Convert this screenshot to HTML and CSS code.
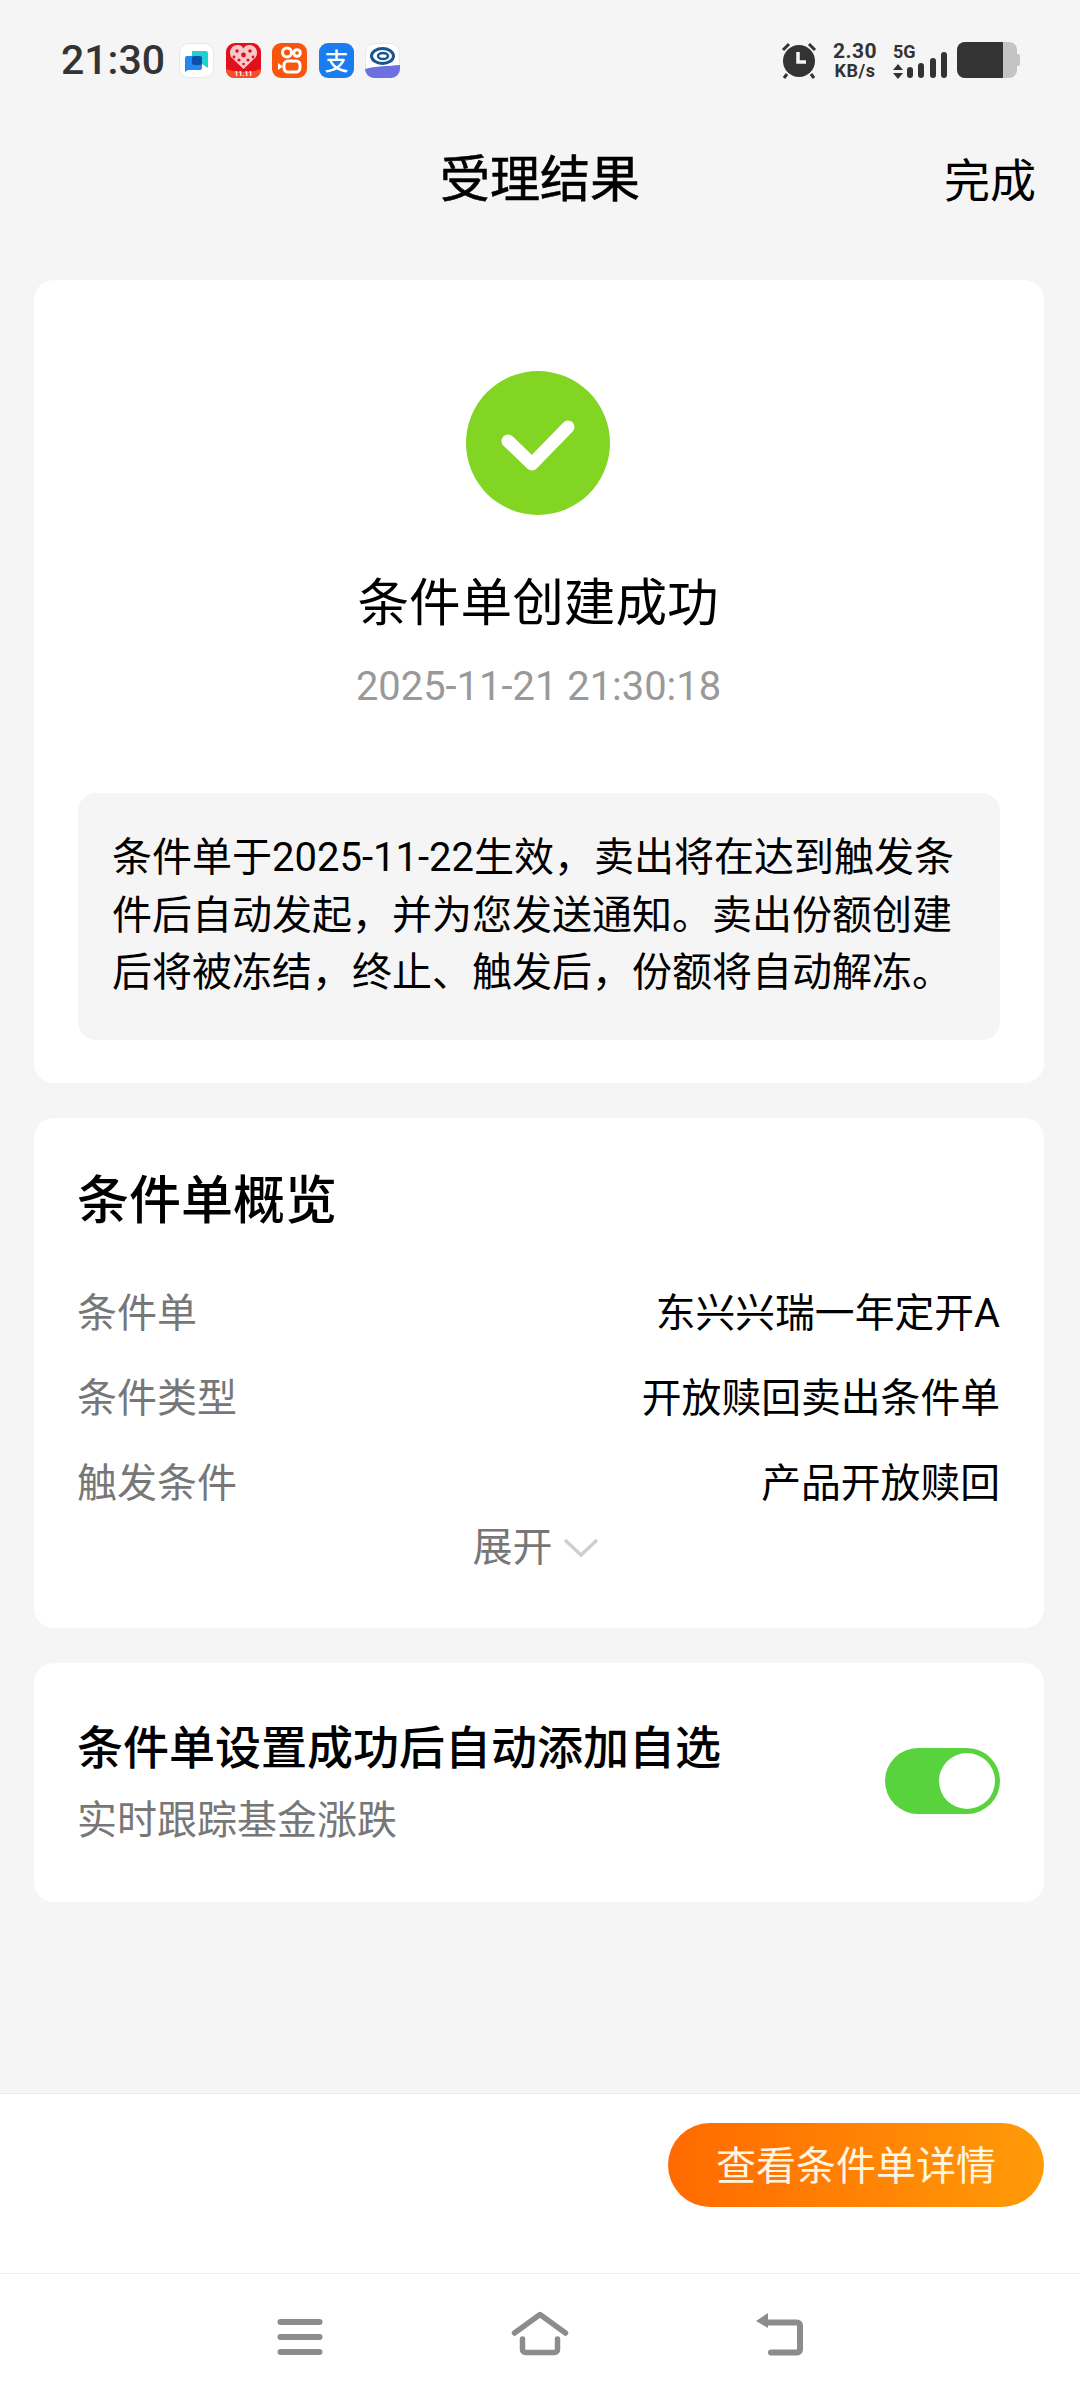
FILE: index.html
```html
<!DOCTYPE html>
<html lang="zh-CN">
<head>
<meta charset="utf-8">
<title>受理结果</title>
<link rel="stylesheet" href="styles.css">
</head>
<body>
<div class="page">
  <div class="status">
    <span class="time">21:30</span>
    <div class="apps">
      <svg class="app" viewBox="0 0 35 35"><rect x=".5" y=".5" width="34" height="34" rx="9" fill="#fff" stroke="#e8e8e8"/><path d="M13 8h14a2 2 0 0 1 2 2v15l-6-4H13z" fill="#1fd0d0"/><path d="M6 15a2 2 0 0 1 2-2h13a2 2 0 0 1 2 2v10a2 2 0 0 1-2 2H9l-3 2z" fill="#2588f0"/><rect x="13" y="13" width="10" height="9" rx="2.500" fill="#0b4fa8"/></svg>
      <svg class="app" viewBox="0 0 35 35"><rect width="35" height="35" rx="9" fill="#e1101c"/><path d="M0 26c6 2 12 3 17.500 3S29 28 35 26v1a8 8 0 0 1-8 8H8a8 8 0 0 1-8-8z" fill="#f2502a"/><path d="M17.500 26 5 14C2 8 6 2 11.500 2c2.500 0 5 1 6 3.500C18.500 3 21 2 23.500 2 29 2 33 8 30 14z" fill="#f9c9c9"/><g fill="#e1101c"><circle cx="11" cy="8" r="1.800"/><circle cx="24" cy="8" r="1.800"/><circle cx="17.500" cy="12" r="2.400"/><circle cx="8" cy="14" r="1.400"/><circle cx="27" cy="14" r="1.400"/><circle cx="13" cy="17" r="1.600"/><circle cx="22" cy="17" r="1.600"/><circle cx="17.500" cy="21" r="1.300"/></g><text class="app-num" x="17.500" y="33">11.11</text></svg>
      <svg class="app" viewBox="0 0 35 35"><rect width="35" height="35" rx="9" fill="#f8560f"/><g fill="none" stroke="#fff" stroke-width="3"><circle cx="15" cy="9.500" r="4.500"/><circle cx="25" cy="10" r="3.300"/><rect x="12" y="18" width="16" height="11" rx="4"/></g><path d="M6 20l5 3.500-5 3.500z" fill="#fff"/></svg>
      <svg class="app" viewBox="0 0 35 35"><rect width="35" height="35" rx="9" fill="#1b7cf0"/><text class="app-zhi" x="17.500" y="27">支</text></svg>
      <svg class="app" viewBox="0 0 35 35"><rect x=".5" y=".5" width="34" height="34" rx="9" fill="#fff" stroke="#e8e8e8"/><path d="M0 26c10-3 24-3 35-4v4a9 9 0 0 1-9 9H9a9 9 0 0 1-9-9z" fill="#6d70de"/><ellipse cx="17.500" cy="13" rx="11" ry="7.500" fill="none" stroke="#1a5590" stroke-width="3"/><ellipse cx="18" cy="13" rx="5" ry="3" fill="none" stroke="#1a5590" stroke-width="2.500"/></svg>
    </div>
    <div class="sys">
      <svg class="alarm" viewBox="0 0 36 38"><circle cx="18" cy="20" r="16" fill="#333"/><path d="M2 9 8 3M34 9l-6-6M6 33l-3 4M30 33l3 4" stroke="#333" stroke-width="3" fill="none"/><path d="M17 11v10h8" stroke="#f5f5f5" stroke-width="3.500" fill="none"/></svg>
      <div class="speed"><span class="speed-num">2.30</span><span class="speed-unit">KB/s</span></div>
      <div class="net">
        <span class="net-label">5G</span>
        <svg class="arrows" viewBox="0 0 10 15"><path d="M5 0l5 6H0zM5 15l5-6H0z" fill="#333"/></svg>
      </div>
      <svg class="signal" viewBox="0 0 41 26"><g fill="#333"><rect x="0" y="15" width="6" height="11" rx="3"/><rect x="11" y="11" width="6" height="15" rx="3"/><rect x="23" y="6" width="6" height="20" rx="3"/><rect x="34" y="0" width="6" height="26" rx="3"/></g></svg>
      <svg class="battery" viewBox="0 0 63 36"><rect x="0" y="0" width="60" height="36" rx="8" fill="#c4c4c4"/><path d="M8 0h38v36H8a8 8 0 0 1-8-8V8a8 8 0 0 1 8-8z" fill="#333"/><path d="M60 12h1a2 2 0 0 1 2 2v8a2 2 0 0 1-2 2h-1z" fill="#c4c4c4"/></svg>
    </div>
  </div>

  <header class="header">
    <span></span>
    <h1 class="title">受理结果</h1>
    <span class="done">完成</span>
  </header>

  <main class="main">
    <section class="card result">
      <svg class="ok" viewBox="0 0 144 144"><circle cx="72" cy="72" r="72" fill="#82d523"/><path d="M42 70l24 23 36-37" fill="none" stroke="#fff" stroke-width="13" stroke-linecap="round" stroke-linejoin="round"/></svg>
      <h2 class="result-title">条件单创建成功</h2>
      <p class="result-date">2025-11-21 21:30:18</p>
      <p class="note">条件单于2025-11-22生效，卖出将在达到触发条<br>件后自动发起，并为您发送通知。卖出份额创建<br>后将被冻结，终止、触发后，份额将自动解冻。</p>
    </section>

    <section class="card overview">
      <h2 class="overview-title">条件单概览</h2>
      <div class="row"><span class="label">条件单</span><span class="value">东兴兴瑞一年定开A</span></div>
      <div class="row"><span class="label">条件类型</span><span class="value">开放赎回卖出条件单</span></div>
      <div class="row"><span class="label">触发条件</span><span class="value">产品开放赎回</span></div>
      <div class="expand"><span>展开</span><svg class="chev" viewBox="0 0 36 20"><path d="M2 2l16 15L34 2" fill="none" stroke="#cfcfcf" stroke-width="3.500"/></svg></div>
    </section>

    <section class="card pref">
      <div class="pref-text">
        <div class="pref-title">条件单设置成功后自动添加自选</div>
        <div class="pref-sub">实时跟踪基金涨跌</div>
      </div>
      <div class="toggle"><span class="knob"></span></div>
    </section>
  </main>

  <footer class="footer">
    <button class="cta">查看条件单详情</button>
  </footer>

  <nav class="nav">
    <svg class="nav-icon" viewBox="0 0 60 60"><g fill="#8c8c8c"><rect x="7.500" y="15" width="45" height="6" rx="3"/><rect x="7.500" y="30" width="45" height="6" rx="3"/><rect x="7.500" y="45" width="45" height="6" rx="3"/></g></svg>
    <svg class="nav-icon" viewBox="0 0 60 60"><g fill="none" stroke="#8c8c8c" stroke-width="5.500" stroke-linecap="round" stroke-linejoin="round"><path d="M4.500 29 30 10.500 55.500 29"/><path d="M12.500 35v10.500a3 3 0 0 0 3 3h29a3 3 0 0 0 3-3V35"/></g></svg>
    <svg class="nav-icon" viewBox="0 0 60 60"><path d="M17 18.500h30a3 3 0 0 1 3 3v24a3 3 0 0 1-3 3H21" fill="none" stroke="#8c8c8c" stroke-width="6" stroke-linecap="round"/><path d="M18 9 6 17l12 7z" fill="#8c8c8c"/></svg>
  </nav>
</div>
</body>
</html>
```
FILE: styles.css
```css
* { box-sizing: border-box; }
html, body { margin: 0; padding: 0; }
body { font-family: Roboto, "Noto Sans CJK SC", sans-serif; color: #000; background: #f5f5f5; }
h1, h2, p { margin: 0; font-weight: 400; }
.page { width: 1080px; height: 2400px; display: flex; flex-direction: column; overflow: hidden; background: #f5f5f5; }

.status { height: 120px; flex: none; display: flex; align-items: center; padding: 0 60px 0 61px; color: #333; }
.time { font-size: 41px; font-weight: 500; line-height: 50px; }
.apps { display: flex; gap: 11.500px; margin-left: 14px; }
.app { width: 35px; height: 35px; display: block; }
.app-num { font: 700 7px Roboto, sans-serif; fill: #fff; text-anchor: middle; }
.app-zhi { font: 500 24px "Noto Sans CJK SC", sans-serif; fill: #fff; text-anchor: middle; }
.sys { margin-left: auto; display: flex; align-items: center; }
.alarm { width: 36px; height: 38px; display: block; }
.speed { display: flex; flex-direction: column; align-items: center; margin-left: 14px; width: 48px; }
.speed-num { font-size: 21px; font-weight: 700; line-height: 20px; letter-spacing: .5px; }
.speed-unit { font-size: 18px; font-weight: 700; line-height: 19px; letter-spacing: .5px; }
.net { display: flex; flex-direction: column; align-items: flex-start; margin-left: 14px; width: 24px; }
.net-label { font-size: 18px; font-weight: 700; line-height: 20px; }
.arrows { width: 10px; height: 15px; display: block; margin-top: 2px; }
.signal { width: 41px; height: 26px; display: block; margin: 10px 0 0 -10px; }
.battery { width: 63px; height: 36px; display: block; margin-left: 9px; }

.header { height: 120px; flex: none; display: grid; grid-template-columns: 1fr auto 1fr; align-items: center; padding-right: 44px; padding-left: 44px; }
.title { font-size: 50px; line-height: 70px; -webkit-text-stroke: .6px #000; }
.done { font-size: 46px; line-height: 70px; justify-self: end; padding-top: 2px; }

.main { flex: 1; padding: 40px 36px 0 34px; display: flex; flex-direction: column; gap: 35px; }
.card { background: #fff; border-radius: 20px; }

.result { height: 803px; padding: 91px 44px 0 44px; display: flex; flex-direction: column; align-items: center; }
.ok { width: 144px; height: 144px; display: block; margin-right: 2px; }
.result-title { font-size: 51.600px; line-height: 70px; margin: 54px 2px 0 0; }
.result-date { font-size: 39.900px; line-height: 60px; margin: 18px 1px 0 0; color: #999; }
.note { align-self: stretch; margin-top: 76px; height: 247px; padding: 36px 20px 0 34px; background: #f5f5f5; border-radius: 18px; font-size: 40px; line-height: 57.500px; white-space: nowrap; }

.overview { height: 510px; padding: 48px 44px 0 43px; }
.overview-title { font-size: 52px; line-height: 72px; font-weight: 500; margin-bottom: 29px; }
.row { height: 85px; display: flex; justify-content: space-between; align-items: center; font-size: 40px; }
.value { font-size: 39.800px; }
.label { color: #777; }
.expand { height: 48px; margin-top: 2px; display: flex; justify-content: center; align-items: center; gap: 10px; font-size: 40px; line-height: 48px; color: #777; padding-right: 6px; }
.chev { width: 36px; height: 20px; display: block; }

.pref { height: 239px; padding: 53px 44px 0 43px; display: flex; justify-content: space-between; align-items: flex-start; }
.pref-title { font-size: 46px; line-height: 64px; font-weight: 500; }
.pref-sub { font-size: 40px; line-height: 56px; margin-top: 13px; color: #777; }
.toggle { width: 115px; height: 66px; margin-top: 32px; border-radius: 33px; background: #58d33e; display: flex; justify-content: flex-end; align-items: center; padding-right: 5px; }
.knob { width: 56px; height: 56px; border-radius: 50%; background: #fff; }

.footer { height: 180px; flex: none; background: #fff; border-top: 1px solid #ececec; padding: 29px 36px 0 0; display: flex; justify-content: flex-end; align-items: flex-start; }
.cta { width: 376px; height: 84px; border: 0; padding: 0 0 5px; border-radius: 42px; background: linear-gradient(90deg, #ff6a00, #ff9a08); color: #fff5e0; font: 400 40px "Noto Sans CJK SC", sans-serif; }

.nav { height: 127px; flex: none; background: #fff; border-top: 1px solid #f0f0f0; padding-top: 30px; display: flex; justify-content: center; gap: 180px; }
.nav-icon { width: 60px; height: 60px; display: block; }
```
